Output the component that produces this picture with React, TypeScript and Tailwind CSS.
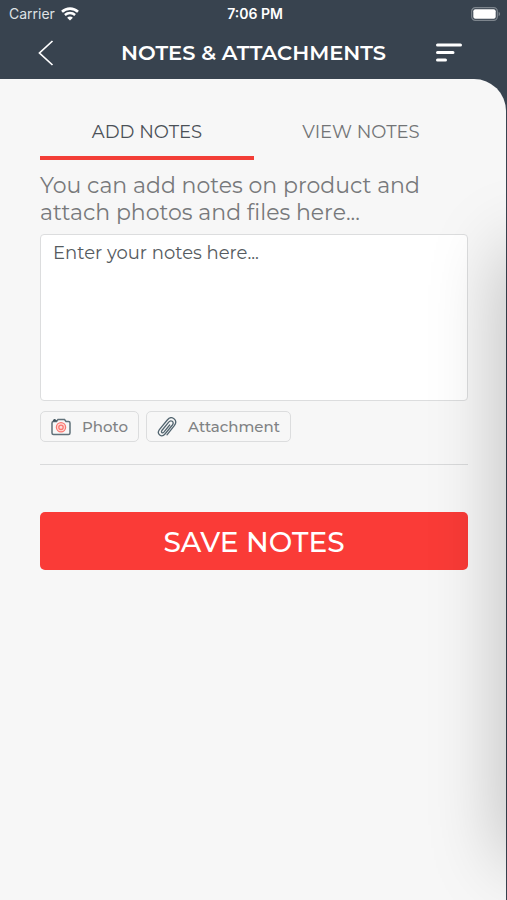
import React, { useState } from "react";

function WifiIcon() {
  return (
    <svg width="18" height="14" viewBox="0 0 18 14" fill="none" aria-hidden="true">
      <path d="M1 4.8C5.5.6 12.5.6 17 4.8" stroke="#fff" strokeWidth="2.6" />
      <path d="M3.9 8C6.8 5.300 11.200 5.300 14.100 8" stroke="#fff" strokeWidth="2.4" />
      <path d="M9 13.600 6.100 10.700C7.700 9.200 10.300 9.200 11.900 10.700Z" fill="#fff" />
    </svg>
  );
}

function BatteryIcon() {
  return (
    <svg width="30" height="14" viewBox="0 0 30 14" fill="none" aria-hidden="true">
      <rect x=".7" y=".7" width="25.6" height="12.6" rx="3.6" stroke="#7d858d" strokeWidth="1.2" />
      <rect x="2.3" y="2.3" width="22.4" height="9.4" rx="2" fill="#fff" />
      <path d="M27.6 4.800C29.600 5.600 29.600 8.400 27.600 9.200Z" fill="#7d858d" />
    </svg>
  );
}

function CameraIcon() {
  return (
    <svg width="20" height="18" viewBox="0 0 20 18" fill="none" aria-hidden="true">
      <path
        d="M2.5 3.500H5.500L7 1.500H13.500L15 3.500H17.500Q19 3.500 19 5V15Q19 16.500 17.500 16.500H2.500Q1 16.500 1 15V5Q1 3.500 2.500 3.500Z"
        stroke="#60717a"
        strokeWidth="1.5"
      />
      <path d="M2 3 3.500 1 5.500 3Z" fill="#3f525c" stroke="#3f525c" />
      <circle cx="10" cy="9.3" r="4.6" fill="#ffdcd9" stroke="#fa7871" strokeWidth="1.3" />
      <circle cx="10" cy="9.3" r="2.200" stroke="#fa7871" strokeWidth="1.3" />
    </svg>
  );
}

function ClipIcon() {
  return (
    <svg
      width="20"
      height="20"
      viewBox="0 0 20 20"
      fill="none"
      stroke="#526570"
      strokeWidth="1.3"
      strokeLinecap="round"
      aria-hidden="true"
    >
      <path d="M10 17.800 17.300 8.700C21.500 3 14.600-2.300 10.300 3L2.400 12.600C-.8 17.200 4.600 21 8 17L15.400 8C17.600 4.900 14 2.300 11.700 5.200L4.900 13.500C3.700 15.400 5.500 16.700 6.900 15.100L12.700 8" />
    </svg>
  );
}

export default function App() {
  const [tab, setTab] = useState<"add" | "view">("add");
  const tabs = [
    { id: "add" as const, label: "ADD NOTES" },
    { id: "view" as const, label: "VIEW NOTES" },
  ];
  const chip =
    "flex h-[31px] items-center gap-[11px] rounded-[5px] border border-[#dcddde] px-[10px] pt-px text-[15px] font-medium text-[#808284]";

  return (
    <div className="relative flex min-h-screen flex-col overflow-hidden bg-[#38434f] font-['Montserrat','Inter',sans-serif]">
      <header className="text-white">
        <div className="grid h-[27px] grid-cols-3 items-center pr-[6px] pl-[9px] font-['Inter',sans-serif] text-[14px]">
          <div className="flex items-center gap-[6px] text-[#dfe2e5]">
            <span>Carrier</span>
            <WifiIcon />
          </div>
          <time className="text-center font-semibold">7:06 PM</time>
          <div className="flex justify-end">
            <BatteryIcon />
          </div>
        </div>
        <div className="grid h-[52px] grid-cols-[1fr_auto_1fr] items-center px-[38px]">
          <button type="button" aria-label="Back" className="justify-self-start">
            <svg width="16" height="26" viewBox="0 0 16 26" fill="none" aria-hidden="true">
              <path d="M14.500 1 1.500 13 14.500 25" stroke="#fff" strokeWidth="1.7" />
            </svg>
          </button>
          <h1 className="text-[21px] font-semibold">NOTES &amp; ATTACHMENTS</h1>
          <button type="button" aria-label="Menu" className="justify-self-end pr-[7px]">
            <svg width="26" height="20" viewBox="0 0 26 20" fill="none" aria-hidden="true">
              <path d="M1.500 2H24.500M1.500 9.500H17M1.500 17H9.500" stroke="#fff" strokeWidth="3" strokeLinecap="round" />
            </svg>
          </button>
        </div>
      </header>

      <main className="mr-px flex-1 rounded-tr-[32px] bg-[#f7f7f7] pt-[25px] pr-[38px] pl-[40px]">
        <div role="tablist" className="grid grid-cols-2">
          {tabs.map((t) => (
            <button
              key={t.id}
              type="button"
              role="tab"
              aria-selected={tab === t.id}
              onClick={() => setTab(t.id)}
              className={
                tab === t.id
                  ? "h-[56px] border-b-4 border-[#f33e37] pt-[4px] text-[18px] text-[#4b5157]"
                  : "h-[56px] border-b-4 border-transparent pt-[4px] text-[18px] text-[#727476]"
              }
            >
              {t.label}
            </button>
          ))}
        </div>

        <label htmlFor="notes" className="mt-[12px] block max-w-[400px] text-[22px] leading-[27px] text-[#77797b]">
          You can add notes on product and attach photos and files here...
        </label>
        <textarea
          id="notes"
          placeholder="Enter your notes here..."
          className="mt-[8px] block h-[167px] w-full resize-none rounded-[4px] border border-[#dcddde] bg-white px-[12px] py-[6px] text-[18px] leading-[24px] text-[#555b60] outline-none placeholder:text-[#555b60]"
        />

        <div className="mt-[10px] flex gap-[7px]">
          <button type="button" className={chip}>
            <CameraIcon />
            Photo
          </button>
          <button type="button" className={chip}>
            <ClipIcon />
            Attachment
          </button>
        </div>

        <hr className="mt-[22px] border-[#d9dadb]" />

        <button
          type="button"
          className="mt-[47px] h-[58px] w-full rounded-[5px] bg-[#fa3b37] pt-[2px] text-[28px] font-medium text-white"
        >
          SAVE NOTES
        </button>
      </main>

      <div
        aria-hidden="true"
        className="pointer-events-none absolute top-[250px] -right-[60px] bottom-[40px] w-[60px] shadow-[0_0_76px_rgba(0,0,0,0.28)]"
      />
    </div>
  );
}
